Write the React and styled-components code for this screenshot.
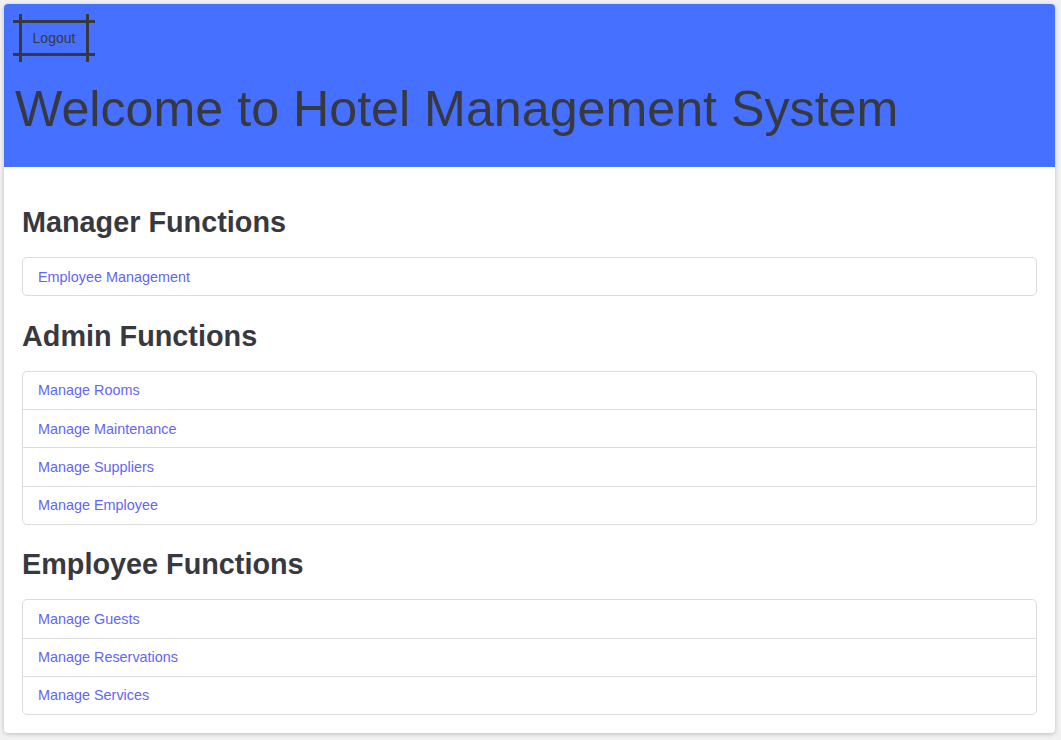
import React from "react";
import styled, { createGlobalStyle } from "styled-components";

const GlobalStyle = createGlobalStyle`
    html, body {
        margin: 0;
        padding: 0;
        background: #f1f1f1;
    }
    body {
        font-family: "Liberation Sans", Arial, sans-serif;
        color: #38383f;
    }
`;

const Page = styled.div`
    margin: 4px 6px 7px 4px;
    background: #ffffff;
    border-radius: 4px;
    box-shadow: 0 1px 4px rgba(0, 0, 0, 0.22);
    overflow: hidden;
`;

const Header = styled.header`
    background: #4670ff;
    padding: 17px 11px 0 11px;
    height: 163px;
    box-sizing: border-box;
`;

const LogoutButton = styled.button`
    position: relative;
    margin-left: 5px;
    width: 68px;
    height: 34px;
    padding: 0;
    border: none;
    background: transparent;
    font-family: "Liberation Sans", Arial, sans-serif;
    font-size: 14px;
    color: #38383f;
    cursor: pointer;

    &::before {
        content: "";
        position: absolute;
        top: -1px;
        bottom: -1px;
        left: -7px;
        right: -7px;
        border-top: 3px solid #38383f;
        border-bottom: 3px solid #38383f;
    }

    &::after {
        content: "";
        position: absolute;
        top: -7px;
        bottom: -7px;
        left: -1px;
        right: -1px;
        border-left: 3px solid #38383f;
        border-right: 3px solid #38383f;
    }
`;

const Title = styled.h1`
    margin: 26px 0 0 0;
    font-size: 50.2px;
    font-weight: 400;
    line-height: 56px;
    color: #38383f;
`;

const Content = styled.main`
    padding: 26px 18px 18px 18px;
`;

const Section = styled.section`
    margin-bottom: 22.5px;

    &:last-child {
        margin-bottom: 0;
    }
`;

const SectionTitle = styled.h2`
    margin: 12px 0 18px 0;
    font-size: 28.8px;
    font-weight: 700;
    line-height: 34px;
    color: #38383f;
`;

const LinkList = styled.ul`
    list-style: none;
    margin: 0;
    padding: 0;
    border: 1px solid #dcdcdc;
    border-radius: 5px;
`;

const LinkItem = styled.li`
    height: 37.25px;
    display: flex;
    align-items: center;
    padding: 0 15px;
    border-top: ${(props) => (props.first ? "none" : "1px solid #dcdcdc")};
`;

const NavLink = styled.a`
    font-size: 14.4px;
    color: #6366f1;
    text-decoration: none;
`;

const sections = [
    { title: "Manager Functions", links: ["Employee Management"] },
    { title: "Admin Functions", links: ["Manage Rooms", "Manage Maintenance", "Manage Suppliers", "Manage Employee"] },
    { title: "Employee Functions", links: ["Manage Guests", "Manage Reservations", "Manage Services"] },
];

function App() {
    return (
        <>
            <GlobalStyle />
            <Page>
                <Header>
                    <LogoutButton>Logout</LogoutButton>
                    <Title>Welcome to Hotel Management System</Title>
                </Header>
                <Content>
                    {sections.map((section) => (
                        <Section key={section.title}>
                            <SectionTitle>{section.title}</SectionTitle>
                            <LinkList>
                                {section.links.map((link, i) => (
                                    <LinkItem key={link} first={i === 0}>
                                        <NavLink href="#">{link}</NavLink>
                                    </LinkItem>
                                ))}
                            </LinkList>
                        </Section>
                    ))}
                </Content>
            </Page>
        </>
    );
}

export default App;
